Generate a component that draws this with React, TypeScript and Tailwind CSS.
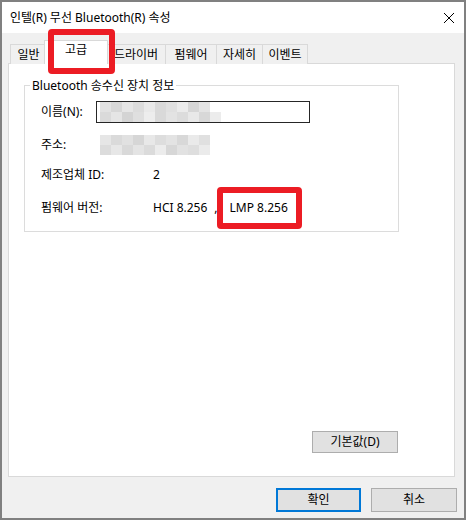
import React from "react";

const nameRow1 = ["#e2e2e2", "#d7d7d7", "#e6e6e6", "#dcdcdc", "#e9e9e9", "#d9d9d9", "#e0e0e0", "#ebebeb", "#d6d6d6", "#e4e4e4"];
const nameRow2 = ["#dadada", "#e5e5e5", "#d4d4d4", "#dfdfdf", "#ededed", "#d9d9d9", "#e3e3e3", "#dcdcdc", "#e8e8e8", "#d8d8d8", "#ececec"];
const addrRow1 = ["#e6e6e6", "#dadada", "#e1e1e1", "#d6d6d6", "#e8e8e8", "#dddddd", "#e3e3e3", "#d8d8d8", "#eaeaea", "#e0e0e0"];
const addrRow2 = ["#dcdcdc", "#e7e7e7", "#d9d9d9", "#e4e4e4", "#dbdbdb", "#ececec", "#d7d7d7", "#e2e2e2", "#dedede", "#ebebeb"];

function Blocks({ rows }: { rows: string[][] }) {
  return (
    <div className="flex flex-col">
      {rows.map((r, i) => (
        <div key={i} className="flex">
          {r.map((c, j) => (
            <div key={j} className="w-[11px] h-[10px]" style={{ backgroundColor: c }} />
          ))}
        </div>
      ))}
    </div>
  );
}

function Tab({ label, w }: { label: string; w: string }) {
  return (
    <div className={`${w} h-[20px] flex items-center justify-center border-t border-l border-[#d9d9d9] bg-[#f0f0f0] text-[12px] leading-[16px] text-black`}>
      {label}
    </div>
  );
}

export default function App() {
  return (
    <div
      className="relative w-[466px] h-[520px] border-2 border-[#808080] bg-[#f0f0f0] flex flex-col text-black"
      style={{ fontFamily: '"Noto Sans", "Noto Sans CJK KR", sans-serif' }}
    >
      {/* Title bar */}
      <div className="h-[31px] bg-white flex items-center justify-between pl-[8px] pr-[10px]">
        <span className="text-[12px] leading-[16px]">인텔(R) 무선 Bluetooth(R) 속성</span>
        <svg width="10" height="10" viewBox="0 0 10 10">
          <path d="M0 0 L10 10 M10 0 L0 10" stroke="#000" strokeWidth="1" />
        </svg>
      </div>

      {/* Body */}
      <div className="flex-1 flex flex-col">
        {/* Tabs */}
        <div className="mt-[7px] ml-[8px] h-[24px] flex items-end relative z-10 -mb-[1px]">
          <Tab label="일반" w="w-[36px]" />
          <div className="relative z-10 -mx-[2px] w-[64px] h-[24px] flex justify-center border-t border-l border-r border-[#d9d9d9] bg-white text-[12px] leading-[16px] pt-[1px]">
            고급
          </div>
          <Tab label="드라이버" w="w-[59px]" />
          <Tab label="펌웨어" w="w-[51px]" />
          <Tab label="자세히" w="w-[46px]" />
          <div className="w-[46px] h-[20px] flex items-center justify-center border-t border-l border-r border-[#d9d9d9] bg-[#f0f0f0] text-[12px] leading-[16px]">
            이벤트
          </div>
        </div>

        {/* Panel */}
        <div className="ml-[6px] w-[447px] h-[414px] border border-[#d9d9d9] bg-white flex flex-col pl-[15px] pt-[21px]">
          <div className="relative w-[375px] h-[147px] border border-[#dcdcdc] pt-[15px] pl-[16px] text-[12px] leading-[16px]">
            <span className="absolute left-[5px] top-0 -translate-y-1/2 bg-white px-[2px] leading-[16px]">
              Bluetooth 송수신 장치 정보
            </span>

            <div className="h-[22px] flex items-center">
              <span className="w-[55px]">이름(N):</span>
              <div className="w-[214px] h-[22px] border border-[#262626] pl-[3px] flex items-center">
                <Blocks rows={[nameRow1, nameRow2]} />
              </div>
            </div>

            <div className="mt-[11px] h-[22px] flex items-center">
              <span className="w-[59px]">주소:</span>
              <Blocks rows={[addrRow1, addrRow2]} />
            </div>

            <div className="mt-[8px] h-[22px] flex items-center">
              <span className="w-[112px]">제조업체 ID:</span>
              <span>2</span>
            </div>

            <div className="mt-[11px] h-[22px] flex items-center">
              <span className="w-[112px]">펌웨어 버전:</span>
              <span>HCI 8.256</span>
              <span className="ml-[7px]">,</span>
              <span className="ml-[12px]">LMP 8.256</span>
            </div>
          </div>

          <div className="flex-1" />

          <div className="w-[375px] flex justify-end mb-[23px]">
            <button className="mr-[1px] w-[86px] h-[22px] bg-[#e1e1e1] border border-[#adadad] text-[12px] leading-[16px] flex items-center justify-center">
              기본값(D)
            </button>
          </div>
        </div>

        {/* Bottom buttons */}
        <div className="mt-[11px] flex justify-end gap-[10px] pr-[7px]">
          <button className="w-[85px] h-[24px] bg-[#e1e1e1] border-2 border-[#0078d7] text-[12px] leading-[16px] flex items-center justify-center">
            확인
          </button>
          <button className="w-[86px] h-[24px] bg-[#e1e1e1] border border-[#adadad] text-[12px] leading-[16px] flex items-center justify-center">
            취소
          </button>
        </div>
      </div>

      {/* Red annotation boxes */}
      <div className="absolute left-[46px] top-[27px] w-[67px] h-[45px] border-[6px] border-[#ec1c24] rounded-[4px] z-20 pointer-events-none" />
      <div className="absolute left-[215px] top-[185px] w-[85px] h-[42px] border-[6px] border-[#ec1c24] rounded-[4px] z-20 pointer-events-none" />
    </div>
  );
}
